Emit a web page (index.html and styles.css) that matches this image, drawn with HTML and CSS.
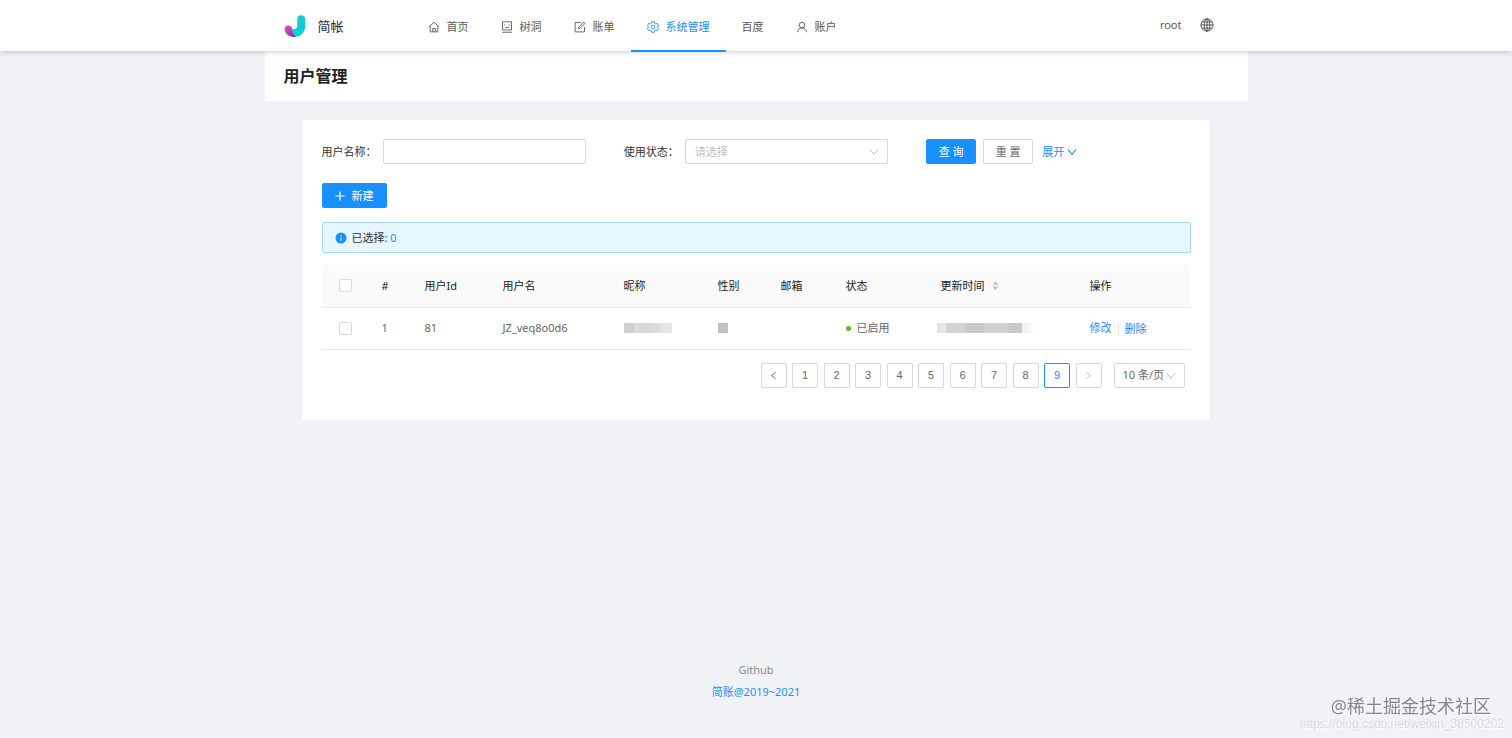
FILE: index.html
```html
<!DOCTYPE html>
<html lang="zh-CN">
<head>
<meta charset="utf-8">
<meta name="viewport" content="width=device-width, initial-scale=1">
<title>用户管理 - 简帐</title>
<link rel="stylesheet" href="styles.css">
</head>
<body>
<header class="header">
  <div class="header-inner">
    <a class="brand" href="#">
      <svg class="brand-logo" viewBox="0 0 22 22" aria-hidden="true">
        <defs>
          <linearGradient id="pink" x1="0" y1="0" x2="1" y2="1"><stop offset="0" stop-color="#f04fc0"/><stop offset="1" stop-color="#7a2fa8"/></linearGradient>
          <linearGradient id="cyan" x1="0" y1="0" x2="0" y2="1"><stop offset="0" stop-color="#1fc9d2"/><stop offset="1" stop-color="#08d2d0"/></linearGradient>
        </defs>
        <path d="M17.200 4.300V11C17.200 15 14.500 17.700 10.500 17.900" fill="none" stroke="url(#cyan)" stroke-width="8" stroke-linecap="round"/>
        <path d="M.6 13.800C.6 9.500 7.600 9.300 8 13.500C8.200 16.500 9.300 19.500 12 21.800C5.500 22.800 .6 19 .6 13.800Z" fill="url(#pink)"/>
      </svg>
      <span>简帐</span>
    </a>
    <nav class="nav">
      <a class="nav-item" href="#">
        <svg class="icon" viewBox="0 0 16 16"><path d="M1 8.200 8 1.500l7 6.700M3 7v7.500h10V7M6.300 14.500V10h3.400v4.500"/></svg>首页</a>
      <a class="nav-item" href="#">
        <svg class="icon" viewBox="0 0 16 16"><path d="M2 1h12v11H2zM1.500 15h13M5 4.500v1.500M11 4.500v1.500M5.500 8.800h5"/></svg>树洞</a>
      <a class="nav-item" href="#">
        <svg class="icon" viewBox="0 0 16 16"><path d="M9 2H1.500v12.500H14V8M6 10.200l.4-2.200L13 1.400l1.700 1.700L8.200 9.700z"/></svg>账单</a>
      <a class="nav-item is-active" href="#" aria-current="page">
        <svg class="icon" viewBox="0 0 16 16"><path d="M6.300 1h3.400l.6 2.100 1.300.8 2.200-.6 1.600 2.900L13.900 8l1.500 1.800-1.600 2.900-2.200-.6-1.300.8-.6 2.100H6.300l-.6-2.100-1.300-.8-2.200.6L.6 9.800 2.100 8 .6 6.200l1.600-2.900 2.200.6 1.300-.8z"/><circle cx="8" cy="8" r="2.500"/></svg>系统管理</a>
      <a class="nav-item" href="#">百度</a>
      <a class="nav-item" href="#">
        <svg class="icon" viewBox="0 0 16 16"><circle cx="8" cy="5.500" r="3.700"/><path d="M2 15c.3-3.600 2.500-5.800 6-5.800s5.700 2.200 6 5.800"/></svg>账户</a>
    </nav>
    <div class="account">
      <a class="account-name" href="#">root</a>
      <button class="lang" type="button" aria-label="语言">
        <svg viewBox="0 0 16 16"><circle cx="8" cy="8" r="7"/><ellipse cx="8" cy="8" rx="3.300" ry="7"/><path d="M8 1v14M1 8h14M2.200 4.500h11.600M2.200 11.500h11.600"/></svg>
      </button>
    </div>
  </div>
</header>

<div class="page-head"><h1>用户管理</h1></div>

<main class="card">
  <form class="search">
    <div class="field">
      <label for="username">用户名称：</label>
      <input class="control" id="username" type="text">
    </div>
    <div class="field">
      <label for="status">使用状态：</label>
      <div class="select">
        <select class="control" id="status"><option>请选择</option><option>已启用</option></select>
        <svg class="chevron" viewBox="0 0 10 10"><path d="M1 2.500 5 7.500 9 2.500"/></svg>
      </div>
    </div>
    <div class="actions">
      <button class="btn btn-primary" type="submit">查 询</button>
      <button class="btn" type="reset">重 置</button>
      <a class="expand" href="#">展开<svg class="icon" viewBox="0 0 10 10"><path d="M1 2.500 5 7.500 9 2.500"/></svg></a>
    </div>
  </form>

  <button class="btn btn-primary btn-new" type="button">
    <svg class="icon" viewBox="0 0 10 10"><path d="M5 .5v9M.5 5h9"/></svg>新建</button>

  <div class="alert" role="status">
    <svg viewBox="0 0 12 12"><circle cx="6" cy="6" r="5.500" fill="#1890ff" stroke="none"/><path d="M6 5.200v3.600M6 3v1.200" stroke="#e6f7ff"/></svg>
    <span>已选择: <a href="#">0</a></span>
  </div>

  <table class="table">
    <colgroup><col class="c-check"><col class="c-index"><col class="c-id"><col class="c-name"><col class="c-nick"><col class="c-sex"><col class="c-mail"><col class="c-status"><col class="c-time"><col></colgroup>
    <thead>
      <tr>
        <th class="check"><input type="checkbox" aria-label="全选"></th>
        <th>#</th><th>用户Id</th><th>用户名</th><th>昵称</th><th>性别</th><th>邮箱</th><th>状态</th>
        <th><span class="sort">更新时间<svg viewBox="0 0 8 10"><path d="M4 0 7.500 4h-7zM4 10 .5 6h7z"/></svg></span></th>
        <th>操作</th>
      </tr>
    </thead>
    <tbody>
      <tr>
        <td class="check"><input type="checkbox" aria-label="选择 JZ_veq8o0d6"></td>
        <td>1</td><td>81</td><td>JZ_veq8o0d6</td>
        <td><span class="mask mask-nick"></span></td>
        <td><span class="mask mask-sex"></span></td>
        <td></td>
        <td><span class="state">已启用</span></td>
        <td class="time"><span class="mask mask-time"></span></td>
        <td><span class="ops"><a href="#">修改</a><a href="#">删除</a></span></td>
      </tr>
    </tbody>
  </table>

  <div class="pagination">
    <div class="pages">
      <button type="button" aria-label="上一页"><svg viewBox="0 0 10 10"><path d="M7.500 1.500 2.500 5l5 3.500"/></svg></button>
      <button type="button">1</button>
      <button type="button">2</button>
      <button type="button">3</button>
      <button type="button">4</button>
      <button type="button">5</button>
      <button type="button">6</button>
      <button type="button">7</button>
      <button type="button">8</button>
      <button class="is-current" type="button" aria-current="page">9</button>
      <button type="button" aria-label="下一页" disabled><svg viewBox="0 0 10 10"><path d="M2.500 1.500 7.500 5l-5 3.500"/></svg></button>
    </div>
    <div class="select page-size">
      <select class="control" aria-label="每页条数"><option>10 条/页</option><option>20 条/页</option></select>
      <svg class="chevron" viewBox="0 0 10 10"><path d="M1 2.500 5 7.500 9 2.500"/></svg>
    </div>
  </div>
</main>

<footer class="footer">
  <a class="footer-link" href="#">Github</a>
  <a href="#">简账@2019~2021</a>
</footer>

<div class="watermark">@稀土掘金技术社区</div>
<div class="watermark-url">https://blog.csdn.net/weixin_38500202</div>
</body>
</html>
```
FILE: styles.css
```css
* { box-sizing: border-box; }

body {
  margin: 0;
  min-height: 100vh;
  display: flex;
  flex-direction: column;
  background: #f0f2f5;
  color: #666;
  font: 11px/18px "Noto Sans", "Noto Sans CJK SC", sans-serif;
}

a { color: #1890ff; text-decoration: none; }
button, input, select { font: inherit; color: inherit; margin: 0; }
svg { flex: none; fill: none; stroke: currentColor; }

.icon { width: 12px; height: 12px; stroke-width: 1.2; }

/* Header */
.header {
  position: relative;
  z-index: 1;
  background: #fff;
  box-shadow: 0 1px 5px rgba(0, 21, 41, .22);
}
.header-inner {
  display: flex;
  max-width: 983px;
  height: 51px;
  margin: 0 auto;
  padding: 0 34px 0 19px;
}
.brand {
  display: flex;
  align-items: center;
  width: 128px;
  gap: 12px;
  color: #14293d;
  font-size: 13px;
}
.brand-logo { width: 22px; height: 22px; stroke: none; }
.nav { display: flex; }
.nav-item {
  display: flex;
  align-items: center;
  gap: 7px;
  padding: 3px 16px 0;
  color: #595959;
  border-bottom: 2px solid transparent;
  margin-bottom: -1px;
}
.nav-item.is-active { color: #1890ff; border-color: #1890ff; }
.account {
  display: flex;
  align-items: center;
  gap: 18px;
  margin-left: auto;
  padding-bottom: 2px;
}
.account-name { color: #595959; }
.lang {
  display: flex;
  padding: 0;
  border: 0;
  background: none;
  color: #444;
}
.lang svg { width: 14px; height: 14px; }

/* Page title */
.page-head {
  width: 100%;
  max-width: 983px;
  margin: 0 auto;
  padding: 13px 19px 12px;
  background: #fff;
}
.page-head h1 {
  margin: 0;
  color: #222;
  font-size: 16px;
  line-height: 25px;
  font-weight: 600;
}

/* Content card */
.card {
  width: 100%;
  max-width: 907px;
  margin: 19px auto 0;
  padding: 19px 19px 32px;
  background: #fff;
}

.search {
  display: grid;
  grid-template-columns: repeat(3, 1fr);
  gap: 38px;
}
.field, .actions { display: flex; align-items: center; }
.field label { flex: none; width: 61px; color: #333; white-space: nowrap; }
.control {
  display: block;
  width: 100%;
  height: 25px;
  padding: 0 9px;
  border: 1px solid #d9d9d9;
  border-radius: 2px;
  background: #fff;
  appearance: none;
}
.select { position: relative; flex: 1; color: #bfbfbf; }
.chevron {
  position: absolute;
  top: 8px;
  right: 9px;
  width: 10px;
  height: 10px;
  color: #bfbfbf;
  pointer-events: none;
}
.btn {
  width: 50px;
  height: 25px;
  margin-right: 7px;
  padding: 0;
  border: 1px solid #d9d9d9;
  border-radius: 2px;
  background: #fff;
}
.btn-primary { border-color: #1890ff; background: #1890ff; color: #fff; }
.expand { display: flex; align-items: center; gap: 3px; margin-left: 2px; }
.expand .icon { width: 10px; height: 10px; }
.btn-new {
  display: flex;
  align-items: center;
  justify-content: center;
  gap: 7px;
  width: 65px;
  margin: 19px 0 14px;
}
.btn-new .icon { width: 10px; height: 10px; }

.alert {
  display: flex;
  align-items: center;
  gap: 5px;
  height: 31px;
  padding: 0 12px;
  border: 1px solid #a5d8fa;
  border-radius: 2px;
  background: #e6f7ff;
  color: #333;
}
.alert svg { width: 12px; height: 12px; }

/* Table */
.table {
  width: 100%;
  margin-top: 12px;
  border-collapse: collapse;
  table-layout: fixed;
}
.c-check { width: 47px; }
.c-index { width: 43px; }
.c-id { width: 78px; }
.c-name { width: 121px; }
.c-nick { width: 94px; }
.c-sex { width: 63px; }
.c-mail { width: 65px; }
.c-status { width: 95px; }
.c-time { width: 149px; }
.table th, .table td {
  height: 42px;
  padding: 0 0 0 13px;
  border-bottom: 1px solid #e8e8e8;
  text-align: left;
  font-weight: 400;
}
.table th { background: #fafafa; color: #222; }
.table .check { padding: 0; text-align: center; }
.check input {
  display: block;
  width: 13px;
  height: 13px;
  margin: 0 auto;
  border: 1px solid #d9d9d9;
  border-radius: 2px;
  background: #fff;
  appearance: none;
}
.sort { display: flex; align-items: center; gap: 7px; }
.sort svg { width: 7px; height: 9px; fill: #bfbfbf; stroke: none; }
.state { display: flex; align-items: center; gap: 6px; }
.state::before {
  width: 5px;
  height: 5px;
  border-radius: 50%;
  background: #52c41a;
  content: "";
}
.mask { display: block; height: 10px; }
.mask-nick { width: 48px; background: linear-gradient(90deg, #cfcfcf 0 20%, #d9d9d9 20% 60%, #dedede 60% 80%, #e6e6e6 80%); }
.mask-sex { width: 10px; background: #c2c2c2; }
.mask-time { width: 96px; background: linear-gradient(90deg, #e6e6e6 0 9%, #d2d2d2 9% 30%, #cacaca 30% 50%, #d0d0d0 50% 75%, #c8c8c8 75% 88%, #eee 89%, #fafafa); }
.table .time { padding-left: 9px; }
.ops { display: flex; align-items: center; }
.ops a + a { margin-left: 6px; padding-left: 6px; border-left: 1px solid #e8e8e8; line-height: 11px; }

/* Pagination */
.pagination {
  display: flex;
  justify-content: flex-end;
  gap: 12px;
  margin-top: 13px;
  padding-right: 6px;
}
.pages { display: flex; justify-content: space-between; width: 341px; }
.pages button {
  display: flex;
  align-items: center;
  justify-content: center;
  width: 26px;
  height: 25px;
  padding: 0;
  border: 1px solid #d9d9d9;
  border-radius: 2px;
  background: #fff;
  font-family: "Liberation Sans", sans-serif;
}
.pages svg { width: 9px; height: 9px; }
.pages .is-current { border-color: #1890ff; color: #1890ff; }
.pages button:disabled { color: #bfbfbf; }
.page-size { flex: none; width: 71px; color: #666; }
.page-size .control { padding: 0 8px; }

/* Footer */
.footer {
  display: flex;
  flex-direction: column;
  align-items: center;
  gap: 4px;
  margin-top: auto;
  padding: 38px 0 37px;
}
.footer-link { color: #8c8c8c; }

/* Watermarks */
.watermark, .watermark-url {
  position: fixed;
  white-space: nowrap;
  pointer-events: none;
}
.watermark {
  right: 21px;
  bottom: 22px;
  color: #858688;
  font-size: 18px;
  line-height: 20px;
  text-shadow: 1px 1px 1px #fff;
}
.watermark-url {
  right: 8px;
  bottom: 8px;
  color: #d8dadd;
  font: 12px/12px "Liberation Sans", sans-serif;
  text-shadow: 0 1px 1px #fff;
}
```
